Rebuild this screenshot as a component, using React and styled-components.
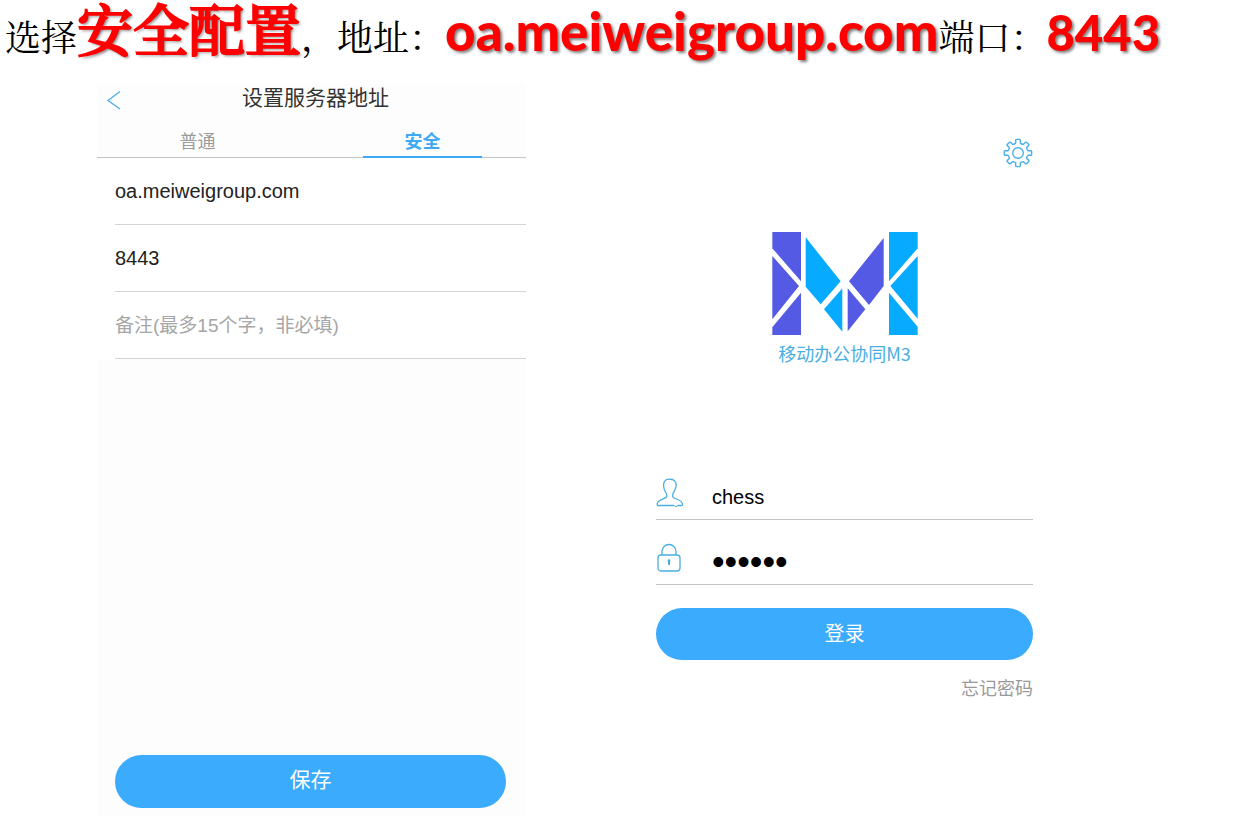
import React from "react";
import styled, { createGlobalStyle } from "styled-components";

const GlobalStyle = createGlobalStyle`
  *, *::before, *::after { box-sizing: border-box; }
  body {
    margin: 0;
    background: #fff;
    color: #222;
    font-family: "Liberation Sans", "Noto Sans CJK SC", sans-serif;
  }
  button, input { font: inherit; }
`;

const Page = styled.main`
  min-height: 100vh;
`;

const Instruction = styled.h1`
  height: 84px;
  margin: 0;
  padding-left: 5px;
  display: flex;
  align-items: baseline;
  white-space: nowrap;
  color: #000;
  font-family: "Noto Serif CJK SC", "Noto Sans CJK SC", serif;
  font-size: 36px;
  font-weight: 400;
  line-height: 60px;
`;

const highlightSizes = { cjk: 56, address: 53, port: 49 };

const Highlight = styled.strong`
  color: #f00;
  font-family: Lato, "Noto Serif CJK SC", "Noto Sans CJK SC", serif;
  font-size: ${(p) => highlightSizes[p.$kind]}px;
  font-weight: ${(p) => (p.$kind === "cjk" ? 500 : 900)};
  -webkit-text-stroke: ${(p) => (p.$kind === "cjk" ? 2 : 0)}px #f00;
  text-shadow: 2px 2px 3px rgba(0, 0, 0, 0.5);
`;

const Screens = styled.div`
  display: grid;
  grid-template-columns: minmax(0, 429fr) minmax(0, 377fr);
  column-gap: 130px;
  padding: 0 210px 14px 97px;
`;

const SettingsPanel = styled.form`
  display: flex;
  flex-direction: column;
  min-height: 732px;
  padding-bottom: 8px;
  background: #fdfdfd;
`;

const TitleBar = styled.header`
  display: grid;
  grid-template-columns: 40px 1fr 32px;
  align-items: center;
  height: 32px;
`;

const IconButton = styled.button`
  display: flex;
  padding: 0;
  border: 0;
  background: none;
  color: #4aaee8;
  cursor: pointer;
`;

const BackButton = styled(IconButton)`
  padding-left: 9px;
`;

const Title = styled.h2`
  margin: 0;
  padding-bottom: 4px;
  color: #333;
  font-size: 21px;
  font-weight: 400;
  line-height: 28px;
  text-align: center;
`;

const Tabs = styled.nav`
  display: flex;
  justify-content: space-between;
  height: 42px;
  padding: 0 44px 0 41px;
  border-bottom: 1px solid #c4c4c4;
`;

const Tab = styled.button`
  width: 119px;
  height: 42px;
  padding: 11px 0 0;
  border: 0;
  border-bottom: 2px solid ${(p) => (p.$active ? "#3da9f5" : "transparent")};
  background: none;
  color: ${(p) => (p.$active ? "#3da9f5" : "#9b9b9b")};
  font-size: 18px;
  font-weight: ${(p) => (p.$active ? 700 : 400)};
  line-height: 24px;
  cursor: pointer;
`;

const Fields = styled.div`
  padding-left: 18px;
  background: #fff;
`;

const Field = styled.input`
  display: block;
  width: 100%;
  height: 67px;
  padding: 0;
  border: 0;
  border-bottom: 1px solid #d4d4d4;
  background: none;
  color: #222;
  font-size: 20px;
  outline: 0;

  &::placeholder {
    color: #a6a6a6;
    font-size: 19px;
    opacity: 1;
  }
`;

const PillButton = styled.button`
  height: 52px;
  padding: 0;
  border: 0;
  border-radius: 27px;
  background: #3aabfd;
  color: #fff;
  font-size: 20px;
  line-height: 28px;
  cursor: pointer;
`;

const SaveButton = styled(PillButton)`
  height: 53px;
  margin: auto 20px 0 18px;
  padding-bottom: 4px;
  font-size: 21px;
`;

const LoginPanel = styled.form`
  display: flex;
  flex-direction: column;
  padding-top: 54px;
`;

const SettingsButton = styled(IconButton)`
  align-self: flex-end;
`;

const Brand = styled.div`
  display: flex;
  flex-direction: column;
  align-items: center;
  gap: 6px;
  margin: 64px 0 90px;
  color: #4aaee0;
  font-size: 18px;
  line-height: 24px;
`;

const BrandName = styled.span`
  font-family: "Noto Sans CJK SC", sans-serif;
`;

const LoginRow = styled.label`
  display: grid;
  grid-template-columns: 56px 1fr;
  align-items: center;
  height: 65px;
  padding-top: 12px;
  border-bottom: 1px solid #c4c4c4;
  color: #4aaee0;
`;

const LoginInput = styled.input`
  width: 100%;
  height: 48px;
  padding: 8px 0 0;
  border: 0;
  background: none;
  color: #000;
  font-size: ${(p) => (p.type === "password" ? 36 : 20)}px;
  outline: 0;
`;

const LoginButton = styled(PillButton)`
  margin-top: 23px;
`;

const ForgotLink = styled.a`
  align-self: flex-end;
  margin-top: 17px;
  color: #999;
  font-size: 18px;
  line-height: 24px;
  text-decoration: none;
`;

function BackIcon() {
  return (
    <svg width="16" height="20" viewBox="0 0 16 20" fill="none" stroke="currentColor" strokeWidth="1.3" aria-hidden="true">
      <path d="M14 1.5 2 10.5l12 8.5" />
    </svg>
  );
}

const gearPath = (() => {
  const pt = (r, deg) => {
    const a = (deg * Math.PI) / 180;
    return `${(15 + r * Math.sin(a)).toFixed(2)} ${(15 - r * Math.cos(a)).toFixed(2)}`;
  };
  let d = "";
  for (let i = 0; i < 8; i += 1) {
    const c = i * 45;
    d += `${i ? "L" : "M"}${pt(10.3, c - 13)}L${pt(13.2, c - 10)}Q${pt(13.9, c - 8)} ${pt(13.7, c - 5)}`;
    d += `L${pt(13.7, c + 5)}Q${pt(13.9, c + 8)} ${pt(13.2, c + 10)}L${pt(10.3, c + 13)}`;
    d += `Q${pt(9.2, c + 22.5)} ${pt(10.3, c + 32)}`;
  }
  return `${d}Z`;
})();

function GearIcon() {
  return (
    <svg width="30" height="30" viewBox="0 0 30 30" fill="none" stroke="currentColor" strokeWidth="1.4" strokeLinejoin="round" aria-hidden="true">
      <path d={gearPath} />
      <circle cx="15" cy="15" r="5.3" />
    </svg>
  );
}

function UserIcon() {
  return (
    <svg width="28" height="30" viewBox="0 0 28 30" fill="none" stroke="currentColor" strokeWidth="1.3" strokeLinecap="round" strokeLinejoin="round" aria-hidden="true">
      <path d="M18 27.5H2Q1 27.5 1.3 25.5C2 21.5 9 21 10.5 19C11.5 17.5 10.5 15.5 9 13C7.5 10.5 7 5.5 8.5 3.5C9.5 1.5 12 1 14 1.3C17 1 20 3 20.2 6.5C20.5 10 18.5 12.5 17.3 15C16.3 17.5 16 19 18 20C21 21.5 26 22 26.5 26Q26.7 27.5 25.5 27.5H22L19.5 28.5" />
    </svg>
  );
}

function LockIcon() {
  return (
    <svg width="26" height="30" viewBox="0 0 26 30" fill="none" stroke="currentColor" strokeWidth="1.3" aria-hidden="true">
      <rect x="2" y="12" width="22" height="16" rx="3" />
      <path d="M6 12V8.5a7 7 0 0 1 14 0V12" />
      <path d="M13 17v5" strokeWidth="2" />
      <circle cx="13" cy="17.7" r="1.4" fill="currentColor" stroke="none" />
    </svg>
  );
}

function Logo() {
  return (
    <svg width="146" height="103" viewBox="38 36 436 309" role="img" aria-label="M3">
      <g fill="#545ae3">
        <path d="M38 36h86v148L38 85z" />
        <path d="M38 108l80 90-80 100z" />
        <path d="M124 218v127H38v-23z" />
        <path d="M372 54v144l-44 57-60-71z" />
        <path d="M264 205l53 63-53 66z" />
      </g>
      <g fill="#06aaff">
        <path d="M138 52l105 132-60 69-45-53z" />
        <path d="M248 205v130l-55-67z" />
        <path d="M388 36h86v49l-86 99z" />
        <path d="M474 108v188l-82-98z" />
        <path d="M388 218l86 102v25h-86z" />
      </g>
    </svg>
  );
}

export default function App() {
  return (
    <Page>
      <GlobalStyle />
      <Instruction>
        <span>选择</span>
        <Highlight $kind="cjk">安全配置</Highlight>
        <span>，地址：</span>
        <Highlight $kind="address">oa.meiweigroup.com</Highlight>
        <span>端口：</span>
        <Highlight $kind="port">8443</Highlight>
      </Instruction>
      <Screens>
        <SettingsPanel onSubmit={(e) => e.preventDefault()}>
          <TitleBar>
            <BackButton type="button" aria-label="返回">
              <BackIcon />
            </BackButton>
            <Title>设置服务器地址</Title>
          </TitleBar>
          <Tabs>
            <Tab type="button">普通</Tab>
            <Tab type="button" $active>安全</Tab>
          </Tabs>
          <Fields>
            <Field aria-label="地址" defaultValue="oa.meiweigroup.com" />
            <Field aria-label="端口" defaultValue="8443" />
            <Field aria-label="备注" placeholder="备注(最多15个字，非必填)" />
          </Fields>
          <SaveButton type="submit">保存</SaveButton>
        </SettingsPanel>
        <LoginPanel onSubmit={(e) => e.preventDefault()}>
          <SettingsButton type="button" aria-label="设置">
            <GearIcon />
          </SettingsButton>
          <Brand>
            <Logo />
            <BrandName>移动办公协同M3</BrandName>
          </Brand>
          <LoginRow>
            <UserIcon />
            <LoginInput type="text" aria-label="用户名" defaultValue="chess" />
          </LoginRow>
          <LoginRow>
            <LockIcon />
            <LoginInput type="password" aria-label="密码" defaultValue="123456" />
          </LoginRow>
          <LoginButton type="submit">登录</LoginButton>
          <ForgotLink href="#forgot">忘记密码</ForgotLink>
        </LoginPanel>
      </Screens>
    </Page>
  );
}
